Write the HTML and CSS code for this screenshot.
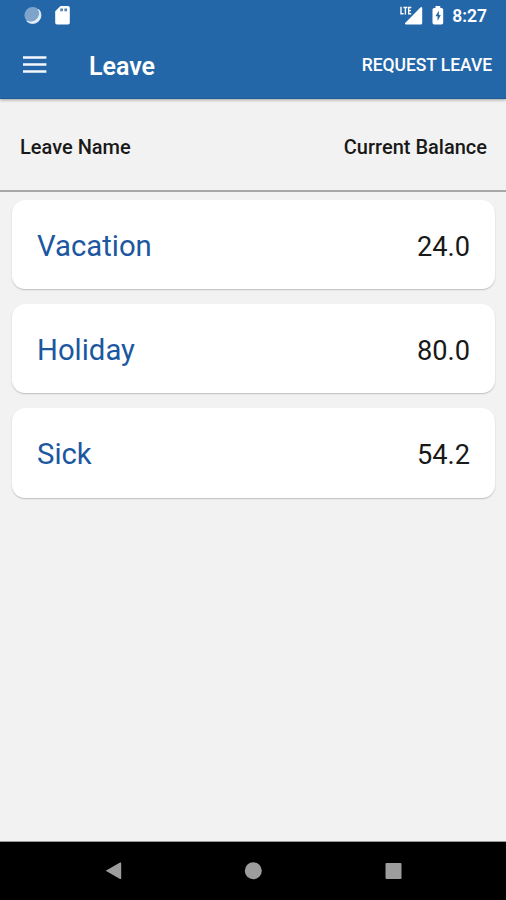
FILE: index.html
```html
<!DOCTYPE html>
<html lang="en">
<head>
<meta charset="utf-8">
<title>Leave</title>
<link rel="stylesheet" href="styles.css">
</head>
<body>
<div class="screen">
  <header class="header">
    <div class="status">
      <svg class="status-left" width="80" height="32" viewBox="0 0 80 32">
        <circle cx="32.7" cy="15.3" r="8.3" fill="#7fa4cc"/>
        <path d="M38.5 9.3A8.3 8.3 0 0 1 26.8 21.1A8.8 8.8 0 0 0 38.5 9.3Z" fill="#e6effa" stroke="#e6effa" stroke-width=".8"/>
        <path d="M60.5 6H68a1.8 1.8 0 0 1 1.8 1.8v14.9a1.8 1.8 0 0 1-1.8 1.8H57a1.8 1.8 0 0 1-1.8-1.8V11.3Z" fill="#fff"/>
        <path d="M60.3 8.6h2.6v2.6h-2.6zM64.4 8.6h2.6v2.6h-2.6z" fill="#4c80b5"/>
      </svg>
      <div class="status-right">
        <svg width="48" height="32" viewBox="398 0 48 32">
          <path d="M402 6.8v7h2.6M404.4 7.5h4M406.4 7.5v6.9M412.3 7.5h-2.6v6.3h2.6M409.7 10.6h2.3" fill="none" stroke="#fff" stroke-width="1.4"/>
          <path d="M423.2 8v15a1.5 1.5 0 0 1-1.5 1.5h-14.6c-1.2 0-1.5-.9-.7-1.7L421.4 7.6c.9-.9 1.8-.6 1.8.4Z" fill="#fff"/>
          <path d="M436.500 6h4.800v1.900h1.200a1.700 1.700 0 0 1 1.700 1.700v13.200a1.700 1.700 0 0 1-1.700 1.700h-7.300a1.700 1.700 0 0 1-1.700-1.700V9.600a1.700 1.700 0 0 1 1.700-1.700h1.300Z" fill="#fff"/>
          <path d="M439.900 10.800l-3.500 5.400h2.200v4.700l3.200-5.800h-1.900Z" fill="#2467a8"/>
        </svg>
        <span class="clock">8:27</span>
      </div>
    </div>
    <div class="toolbar">
      <svg class="menu" width="24" height="18" viewBox="0 0 24 18"><path d="M0 1.500h23.400M0 8.500h23.400M0 15.500h23.400" stroke="#f4f8fd" stroke-width="2.700"/></svg>
      <h1 class="title">Leave</h1>
      <span class="request">REQUEST LEAVE</span>
    </div>
  </header>
  <div class="columns"><span>Leave Name</span><span>Current Balance</span></div>
  <main class="cards">
    <div class="card"><span class="name">Vacation</span><span class="balance">24.0</span></div>
    <div class="card"><span class="name">Holiday</span><span class="balance">80.0</span></div>
    <div class="card"><span class="name">Sick</span><span class="balance">54.2</span></div>
  </main>
  <nav class="nav">
    <svg width="506" height="58" viewBox="0 0 506 58" fill="#9d9d9d">
      <path d="M105.700 28.800L120 20.600a.8.8 0 0 1 1.200.7v15a.8.8 0 0 1-1.200.7Z"/>
      <circle cx="253.300" cy="28.800" r="8.500"/>
      <rect x="385.500" y="21" width="16" height="16" rx="1"/>
    </svg>
  </nav>
</div>
</body>
</html>
```
FILE: styles.css
```css
* { box-sizing: border-box; }
body { margin: 0; font-family: Roboto, sans-serif; background: #f2f2f2; }
.screen { width: 506px; height: 900px; display: flex; flex-direction: column; overflow: hidden; }
.header {
  height: 99px;
  flex: none;
  background: #2467a8;
  color: #fff;
  border-bottom: 1px solid #205994;
  box-shadow: 0 1px 3px rgba(0, 0, 0, .35);
}
.status { height: 32px; display: flex; justify-content: space-between; }
.status svg { display: block; }
.status-right { display: flex; padding-right: 19px; gap: 7px; }
.clock { font-size: 17.5px; font-weight: 600; line-height: 32px; }
.toolbar { height: 66px; display: flex; align-items: center; padding: 0 14px 0 23px; }
.title { margin: 4px auto 0 42px; font-size: 25px; line-height: 30px; font-weight: 600; }
.request { font-size: 17.5px; font-weight: 500; letter-spacing: -.05px; }
.columns {
  height: 93px;
  flex: none;
  display: flex;
  justify-content: space-between;
  align-items: center;
  padding: 4px 19px 0 20px;
  border-bottom: 2px solid #a8a8a8;
  font-size: 20px;
  font-weight: 500;
  color: #191919;
}
.cards { flex: 1; display: flex; flex-direction: column; gap: 15px; padding: 8px 11px 0 12px; }
.card {
  height: 89.2px;
  display: flex;
  justify-content: space-between;
  align-items: center;
  padding: 2px 25px 0;
  border-radius: 13px;
  background: #fff;
  box-shadow: 0 1px 1.5px rgba(0, 0, 0, .22);
}
.name { font-size: 29.3px; color: #1c579f; }
.balance { font-size: 27.2px; color: #191919; padding-top: 2px; }
.nav { height: 58px; flex: none; background: #000; box-shadow: 0 -1px 0 #999; }
.nav svg { display: block; }
```
